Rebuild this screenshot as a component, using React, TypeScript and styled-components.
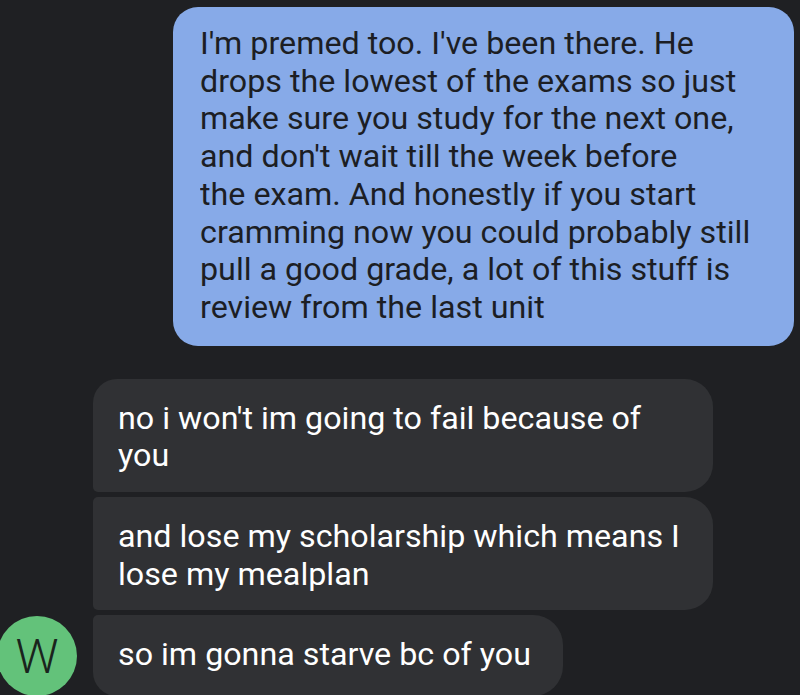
import React from "react";
import styled, { createGlobalStyle } from "styled-components";

const GlobalStyle = createGlobalStyle`
  html, body {
    margin: 0;
    padding: 0;
    background: #1f2023;
    overflow: hidden;
  }
`;

const Thread = styled.div`
  width: 800px;
  height: 695px;
  overflow: hidden;
  display: flex;
  flex-direction: column;
  padding-top: 7px;
  box-sizing: border-box;
  font-family: Roboto, "Noto Sans", sans-serif;
`;

const SentRow = styled.div`
  display: flex;
  justify-content: flex-end;
  padding-right: 6px;
`;

const SentBubble = styled.div`
  width: 621px;
  box-sizing: border-box;
  padding: 18px 27px 19px;
  border-radius: 25px;
  background: #87aae8;
  color: #1c1e24;
`;

const Text = styled.div`
  font-size: 31px;
  line-height: 37.7px;
  white-space: nowrap;
  transform: scaleX(1.04);
  transform-origin: left top;
`;

const ReceivedGroup = styled.div`
  margin-top: 33px;
  display: grid;
  grid-template-columns: 93px auto;
  row-gap: 5px;
  justify-content: start;
`;

type Pos = "first" | "middle" | "last";

const ReceivedBubble = styled.div<{ $pos: Pos; $w: number }>`
  grid-column: 2;
  width: ${(p) => p.$w}px;
  box-sizing: border-box;
  padding: 21px 25px 17px;
  background: #303134;
  color: #ffffff;
  border-radius: ${(p) =>
    p.$pos === "first"
      ? "24px 28px 28px 5px"
      : p.$pos === "middle"
      ? "5px 28px 28px 5px"
      : "5px 30px 30px 24px"};
`;

const Avatar = styled.div`
  grid-column: 1;
  grid-row: 3;
  align-self: start;
  margin-left: -3px;
  margin-top: 1px;
  width: 80px;
  height: 80px;
  border-radius: 50%;
  background: #63c27a;
  color: #1a241d;
  display: flex;
  align-items: center;
  justify-content: center;
  font-family: Roboto, "Noto Sans", sans-serif;
  font-weight: 300;
  font-size: 48px;
`;

const sent = [
  "I'm premed too. I've been there. He",
  "drops the lowest of the exams so just",
  "make sure you study for the next one,",
  "and don't wait till the week before",
  "the exam. And honestly if you start",
  "cramming now you could probably still",
  "pull a good grade, a lot of this stuff is",
  "review from the last unit",
];

const received: { lines: string[]; w: number; pos: Pos }[] = [
  { lines: ["no i won't im going to fail because of", "you"], w: 620, pos: "first" },
  { lines: ["and lose my scholarship which means I", "lose my mealplan"], w: 620, pos: "middle" },
  { lines: ["so im gonna starve bc of you"], w: 470, pos: "last" },
];

export default function App() {
  return (
    <>
      <GlobalStyle />
      <Thread>
        <SentRow>
          <SentBubble>
            <Text>
              {sent.map((l, i) => (
                <div key={i}>{l}</div>
              ))}
            </Text>
          </SentBubble>
        </SentRow>
        <ReceivedGroup>
          {received.map((m, i) => (
            <ReceivedBubble key={i} $pos={m.pos} $w={m.w} style={{ gridRow: i + 1 }}>
              <Text>
                {m.lines.map((l, j) => (
                  <div key={j}>{l}</div>
                ))}
              </Text>
            </ReceivedBubble>
          ))}
          <Avatar>W</Avatar>
        </ReceivedGroup>
      </Thread>
    </>
  );
}
